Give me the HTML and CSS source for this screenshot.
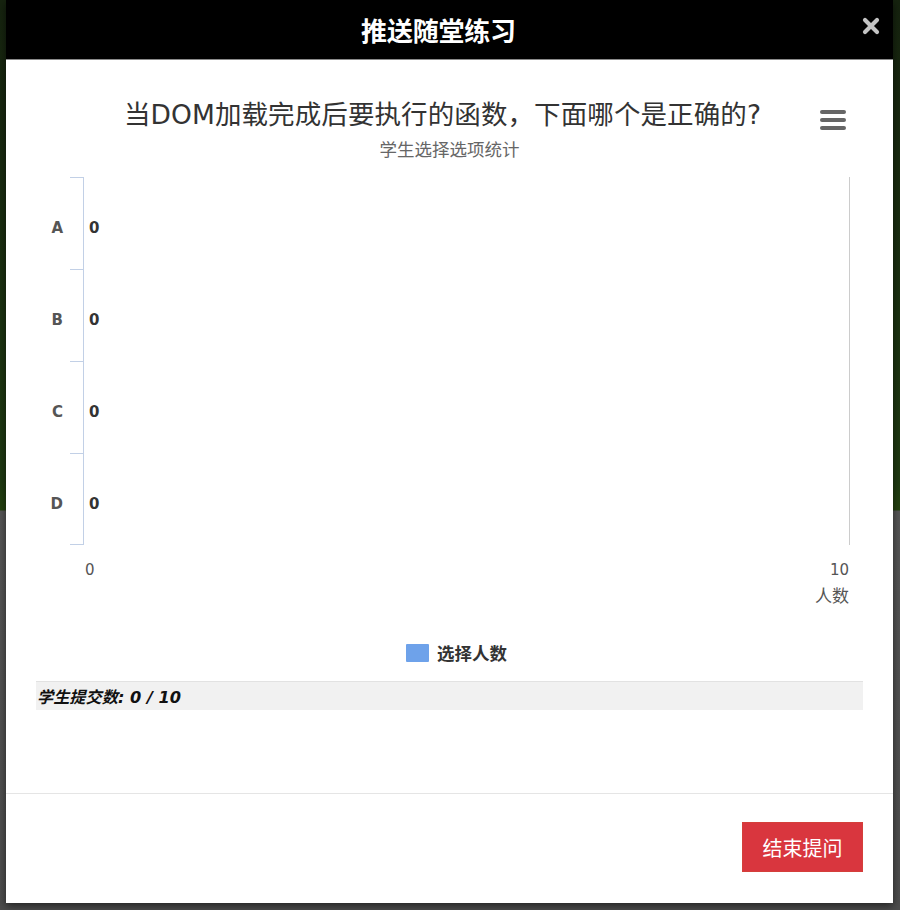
FILE: index.html
```html
<!DOCTYPE html>
<html lang="zh-CN">
<head>
<meta charset="utf-8">
<title>推送随堂练习</title>
<link rel="stylesheet" href="styles.css">
</head>
<body>
<div class="modal">
  <div class="modal-header">
    <h4 class="modal-title">推送随堂练习</h4>
    <button class="close" aria-label="关闭">
      <svg width="18" height="18" viewBox="0 0 18 18"><path d="M3 3L15 15M15 3L3 15" stroke="#c4c4c4" stroke-width="4.2" stroke-linecap="round"/></svg>
    </button>
  </div>
  <div class="modal-body">
    <div class="chart">
      <div class="chart-head">
        <div class="chart-title">当DOM加载完成后要执行的函数，下面哪个是正确的?</div>
        <div class="chart-subtitle">学生选择选项统计</div>
        <span class="menu-btn"><i></i><i></i><i></i></span>
      </div>
      <div class="plot">
        <div class="cats">
          <div class="cat"><span class="cat-label">A</span><span class="tick"></span></div>
          <div class="cat"><span class="cat-label">B</span><span class="tick"></span></div>
          <div class="cat"><span class="cat-label">C</span><span class="tick"></span></div>
          <div class="cat"><span class="cat-label">D</span><span class="tick"></span></div>
        </div>
        <div class="bars">
          <div class="bar-row"><span class="val">0</span></div>
          <div class="bar-row"><span class="val">0</span></div>
          <div class="bar-row"><span class="val">0</span></div>
          <div class="bar-row"><span class="val">0</span></div>
        </div>
      </div>
      <div class="xlabels"><span>0</span><span>10</span></div>
      <div class="xtitle">人数</div>
      <div class="legend"><span class="swatch"></span><span class="legend-text">选择人数</span></div>
    </div>
    <div class="submit-count">学生提交数: 0 / 10</div>
  </div>
  <div class="modal-footer">
    <button class="btn-danger">结束提问</button>
  </div>
</div>
</body>
</html>
```

FILE: styles.css
```css
html, body {
  margin: 0;
  padding: 0;
}
body {
  width: 900px;
  height: 910px;
  overflow: hidden;
  background: linear-gradient(to bottom, #16230f 0, #1f3a12 480px, #24420f 510px, #565656 511px, #4d4d4d 910px);
  font-family: "DejaVu Sans", "Noto Sans CJK SC", sans-serif;
}
.modal {
  margin-left: 6px;
  width: 887px;
  background: #fff;
  box-shadow: 0 3px 8px rgba(0, 0, 0, 0.55);
}
.modal-header {
  position: relative;
  height: 59px;
  background: #000;
  display: flex;
  align-items: center;
  justify-content: center;
  padding-right: 22px;
  box-sizing: border-box;
}
.modal-title {
  margin: 0;
  color: #fff;
  font-family: "Noto Sans CJK SC", sans-serif;
  font-size: 26px;
  font-weight: bold;
  line-height: 32px;
  letter-spacing: -0.2px;
}
.close {
  position: absolute;
  right: 13px;
  top: 17px;
  width: 18px;
  height: 18px;
  padding: 0;
  border: 0;
  background: none;
  display: flex;
}
.modal-body {
  border-top: 1px solid #8a8a8a;
  height: 734px;
  box-sizing: border-box;
  padding: 0 30px 0 30px;
}
.chart-head {
  position: relative;
  padding-top: 39px;
  text-align: center;
}
.chart-title {
  font-size: 26.5px;
  line-height: 32px;
  color: #333;
  padding-right: 14px;
  letter-spacing: 0.1px;
  font-family: "DejaVu Sans", "Noto Sans CJK SC", sans-serif;
}
.chart-subtitle {
  margin-top: 7px;
  font-size: 17.5px;
  line-height: 22px;
  color: #666;
  font-family: "Noto Sans CJK SC", sans-serif;
}
.menu-btn {
  position: absolute;
  right: 17px;
  top: 50px;
  width: 26px;
  display: flex;
  flex-direction: column;
  gap: 4px;
}
.menu-btn i {
  display: block;
  height: 4px;
  border-radius: 2px;
  background: #666;
}
.plot {
  display: flex;
  margin-top: 17px;
}
.cats {
  width: 47px;
}
.cat {
  display: flex;
  height: 92px;
}
.cat-label {
  width: 34px;
  box-sizing: border-box;
  text-align: right;
  padding-right: 7px;
  padding-top: 10px;
  display: flex;
  align-items: center;
  justify-content: flex-end;
  font-size: 15px;
  font-weight: bold;
  color: #555;
}
.tick {
  width: 13px;
  box-sizing: border-box;
  border-top: 1px solid #c2d0e6;
}
.cat:last-child .tick {
  border-bottom: 1px solid #c2d0e6;
}
.bars {
  flex: 1;
  margin-right: 13px;
  border-left: 1px solid #c2d0e6;
  border-right: 1px solid #cccccc;
}
.bar-row {
  height: 92px;
  padding-left: 5px;
  padding-top: 10px;
  box-sizing: border-box;
  display: flex;
  align-items: center;
  font-size: 15px;
  font-weight: bold;
  color: #333;
}
.xlabels {
  display: flex;
  justify-content: space-between;
  margin: 16px 14px 0 49px;
  font-size: 15px;
  line-height: 18px;
  color: #555;
}
.xtitle {
  text-align: right;
  margin-right: 14px;
  margin-top: 6px;
  font-family: "Noto Sans CJK SC", sans-serif;
  font-size: 17px;
  line-height: 20px;
  color: #555;
}
.legend {
  display: flex;
  justify-content: center;
  align-items: center;
  gap: 8px;
  margin-top: 38px;
  padding-left: 14px;
  height: 20px;
}
.swatch {
  width: 23px;
  height: 18px;
  background: #6ea2ea;
  border-radius: 1px;
}
.legend-text {
  font-family: "Noto Sans CJK SC", sans-serif;
  font-size: 17.5px;
  font-weight: bold;
  color: #333;
  line-height: 20px;
}
.submit-count {
  margin-top: 18px;
  height: 29px;
  box-sizing: border-box;
  background: #f1f1f1;
  border-top: 1px solid #e2e2e2;
  padding-left: 1px;
  display: flex;
  align-items: center;
  font-family: "DejaVu Sans", "Noto Sans CJK SC", sans-serif;
  font-size: 16.2px;
  font-weight: bold;
  font-style: italic;
  color: #111;
}
.modal-footer {
  border-top: 1px solid #e5e5e5;
  padding: 28px 30px 31px 0;
  display: flex;
  justify-content: flex-end;
}
.btn-danger {
  width: 121px;
  height: 50px;
  background: #d9363e;
  border: 1px solid #d43f3a;
  border-radius: 0;
  color: #fff;
  font-family: "Noto Sans CJK SC", sans-serif;
  font-size: 20px;
  padding: 0;
}
```
